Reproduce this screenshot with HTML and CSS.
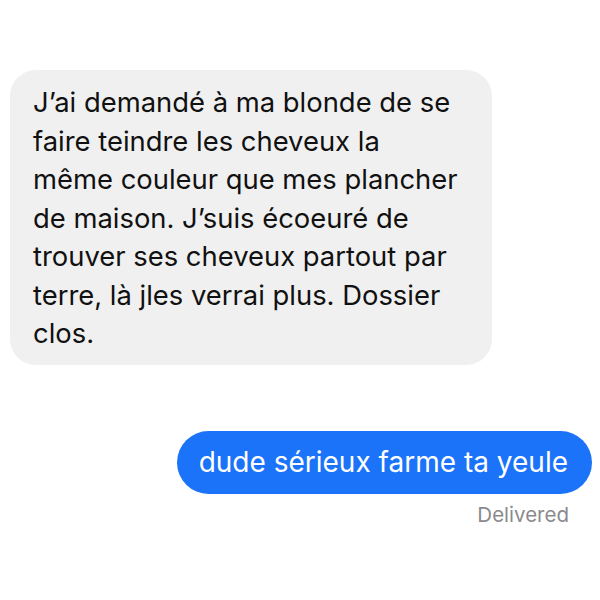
FILE: index.html
```html
<!DOCTYPE html>
<html>
<head>
<meta charset="utf-8">
<link rel="stylesheet" href="styles.css">
</head>
<body>
<div class="thread">
  <div class="row received">
    <div class="bubble gray">J’ai demandé à ma blonde de se<br>faire teindre les cheveux la<br>même couleur que mes plancher<br>de maison. J’suis écoeuré de<br>trouver ses cheveux partout par<br>terre, là jles verrai plus. Dossier<br>clos.</div>
  </div>
  <div class="row sent">
    <div class="bubble blue">dude sérieux farme ta yeule</div>
  </div>
  <div class="status">Delivered</div>
</div>
</body>
</html>
```
FILE: styles.css
```css
html, body { margin: 0; padding: 0; background: #fff; }
body { width: 600px; height: 600px; overflow: hidden; font-family: Inter, "Liberation Sans", sans-serif; }
.thread { display: flex; flex-direction: column; padding: 70px 8px 0 10px; }
.row { display: flex; }
.received { justify-content: flex-start; }
.sent { justify-content: flex-end; margin-top: 66px; }
.bubble { font-size: 27.4px; line-height: 38.5px; white-space: nowrap; }
.gray { background: #f0f0f0; color: #111; width: 482px; box-sizing: border-box; padding: 13px 20px 12px 23px; border-radius: 26px; }
.blue { background: #1a73f8; color: #fff; height: 63px; box-sizing: border-box; padding: 12px 24px 12px 22px; border-radius: 32px; font-size: 28px; }
.status { align-self: flex-end; margin-right: 23px; margin-top: 8px; font-size: 20.5px; line-height: 25px; color: #8a8a8e; }
```
